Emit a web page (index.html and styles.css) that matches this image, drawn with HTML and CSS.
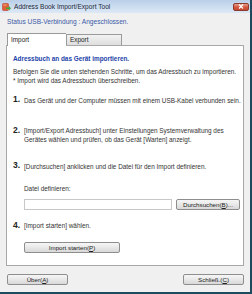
FILE: index.html
```html
<!DOCTYPE html>
<html lang="de">
<head>
    <meta charset="UTF-8" />
    <title>Address Book Import/Export Tool</title>
    <link rel="stylesheet" href="styles.css">
</head>
<body>
<div class="window">
    <div class="titlebar">
        <svg class="app-icon" width="9" height="8" viewBox="0 0 9 8">
            <rect x="0.5" y="0.5" width="6" height="7" rx="1" fill="#e0603a" stroke="#b8402a" stroke-width="0.6"/>
            <rect x="1.5" y="1.5" width="3" height="1" fill="#f6b08a"/>
            <path d="M4 4.5 H7 V3 L9 5.2 L7 7.4 V6 H4 Z" fill="#3fae3a"/>
        </svg>
        <span class="title">Address Book Import/Export Tool</span>
        <button class="close-btn">
            <svg width="6" height="5" viewBox="0 0 6 5"><path d="M1 0.5 L5 4.5 M5 0.5 L1 4.5" stroke="#fff" stroke-width="1.3"/></svg>
        </button>
    </div>

    <div class="body">
        <div class="status">Status USB-Verbindung : Angeschlossen.</div>

        <div class="tabs">
            <div class="tab active">Import</div>
            <div class="tab">Export</div>
        </div>

        <div class="panel">
            <div class="heading">Adressbuch an das Gerät importieren.</div>
            <p class="intro">Befolgen Sie die unten stehenden Schritte, um das Adressbuch zu importieren.<br>* Import wird das Adressbuch überschreiben.</p>

            <div class="step step-1">
                <span class="num">1.</span>
                <span class="text">Das Gerät und der Computer müssen mit einem USB-Kabel verbunden sein.</span>
            </div>
            <div class="step step-2">
                <span class="num">2.</span>
                <span class="text">[Import/Export Adressbuch] unter Einstellungen Systemverwaltung des Gerätes wählen und prüfen, ob das Gerät [Warten] anzeigt.</span>
            </div>
            <div class="step step-3">
                <span class="num">3.</span>
                <span class="text">[Durchsuchen] anklicken und die Datei für den Import definieren.</span>
            </div>

            <div class="file-label">Datei definieren:</div>
            <div class="file-row">
                <input type="text" class="file-input">
                <button class="btn browse-btn">Durchsuchen(<u>B</u>)...</button>
            </div>

            <div class="step step-4">
                <span class="num">4.</span>
                <span class="text">[Import starten] wählen.</span>
            </div>
            <button class="btn import-btn">Import starten(<u>P</u>)</button>
        </div>

        <div class="footer">
            <button class="btn footer-btn">Über(<u>A</u>)</button>
            <button class="btn footer-btn">Schließ.(<u>C</u>)</button>
        </div>
    </div>
</div>
</body>
</html>
```

FILE: styles.css
```css
body {
    margin: 0;
    background: #f0f0f0;
    font-family: 'Liberation Sans', Arial, sans-serif;
    font-size: 6.4px;
    color: #333;
}
.window {
    width: 250px;
    height: 292px;
    background: #f0f0f0;
    border-right: 2px solid #1d4a5c;
    border-bottom: 2px solid #1d4a5c;
    display: flex;
    flex-direction: column;
}
.titlebar {
    height: 13px;
    flex-shrink: 0;
    display: flex;
    align-items: center;
    background: linear-gradient(180deg, #b9cfe8 0%, #cfdff1 60%, #dde8f5 100%);
    padding-left: 2px;
}
.app-icon {
    margin-right: 3px;
}
.title {
    color: #1e2a3a;
    font-size: 6.6px;
    flex: 1;
}
.close-btn {
    width: 16px;
    height: 8px;
    margin-right: 1px;
    padding: 0;
    border: 1px solid #8c3a2c;
    border-radius: 2px;
    background: linear-gradient(180deg, #e9a08c 0%, #d2553c 55%, #c44a33 100%);
    display: flex;
    align-items: center;
    justify-content: center;
}
.body {
    flex: 1;
    display: flex;
    flex-direction: column;
    padding: 0 6px;
}
.status {
    color: #3a5aa6;
    margin-top: 5px;
    margin-left: 1px;
    line-height: 8px;
    font-size: 6.6px;
}
.tabs {
    display: flex;
    margin-top: 7px;
    margin-left: 1px;
    height: 12px;
    align-items: flex-end;
}
.tab {
    height: 10px;
    line-height: 10px;
    padding-left: 3px;
    width: 51px;
    border: 1px solid #9a9a9a;
    border-bottom: none;
    background: linear-gradient(180deg, #f2f2f2, #dedede);
    color: #222;
}
.tab.active {
    height: 12px;
    line-height: 11px;
    width: 55px;
    background: #fff;
    position: relative;
    top: 1px;
    border-right: none;
}
.panel {
    background: #fff;
    border: 1px solid #a8a8a8;
    height: 221px;
    width: 238px;
    box-sizing: border-box;
    padding: 9px 0 0 6px;
}
.heading {
    color: #1c3fa8;
    font-weight: bold;
    line-height: 8px;
}
.intro {
    margin: 4px 0 0 0;
    line-height: 9px;
}
.step {
    display: flex;
    align-items: flex-start;
    line-height: 9px;
}
.num {
    width: 11px;
    flex-shrink: 0;
    font-weight: bold;
    font-size: 8.5px;
    color: #222;
}
.text {
    padding-top: 0.5px;
}
.step-1 { margin-top: 10px; }
.step-2 { margin-top: 21px; }
.step-3 { margin-top: 17px; }
.step-4 { margin-top: 11px; }
.step-1 .text {
    white-space: nowrap;
}
.step-2 .text {
    width: 212px;
}
.file-label {
    margin: 14px 0 0 11px;
    line-height: 8px;
}
.file-row {
    display: flex;
    margin: 6px 0 0 11px;
    gap: 4px;
}
.file-input {
    width: 148px;
    height: 11px;
    box-sizing: border-box;
    border: 1px solid #c8c8c8;
    padding: 0;
    margin: 0;
}
.btn {
    height: 11px;
    box-sizing: border-box;
    padding: 0;
    border: 1px solid #8e8e8e;
    border-radius: 2px;
    background: linear-gradient(180deg, #f6f6f6 0%, #e8e8e8 50%, #d8d8d8 100%);
    font-family: 'Liberation Sans', Arial, sans-serif;
    font-size: 6.2px;
    color: #222;
    line-height: 9px;
}
.browse-btn {
    width: 64px;
}
.import-btn {
    width: 96px;
    margin: 12px 0 0 11px;
    display: block;
}
.footer {
    display: flex;
    justify-content: space-between;
    margin-top: 8px;
    padding-left: 1px;
}
.footer-btn {
    width: 61px;
}
```
